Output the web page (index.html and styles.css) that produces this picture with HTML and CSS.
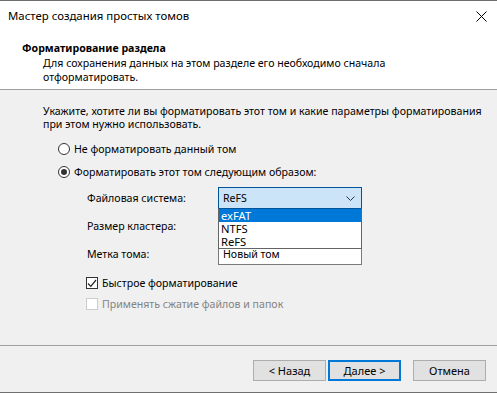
FILE: index.html
```html
<!DOCTYPE html>
<html lang="ru">
<head>
<meta charset="utf-8">
<title>Мастер создания простых томов</title>
<link rel="stylesheet" href="styles.css">
</head>
<body>
<div class="window">
  <div class="titlebar">
    <span class="title">Мастер создания простых томов</span>
    <svg class="close" width="11" height="11" viewBox="0 0 11 11"><path d="M0.5 0.5 L10.5 10.5 M10.5 0.5 L0.5 10.5" stroke="#000" stroke-width="1" fill="none"/></svg>
  </div>
  <div class="header">
    <div class="h-title">Форматирование раздела</div>
    <div class="h-sub">Для сохранения данных на этом разделе его необходимо сначала<br>отформатировать.</div>
  </div>
  <div class="content">
    <p class="intro">Укажите, хотите ли вы форматировать этот том и какие параметры форматирования<br>при этом нужно использовать.</p>
    <div class="radio-row first"><span class="radio"></span><span>Не форматировать данный том</span></div>
    <div class="radio-row"><span class="radio checked"></span><span>Форматировать этот том следующим образом:</span></div>
    <div class="form">
      <span class="label">Файловая система:</span>
      <div class="combo focused"><span>ReFS</span>
        <svg class="chev" width="9" height="5" viewBox="0 0 9 5"><path d="M0.5 0.5 L4.5 4.5 L8.5 0.5" stroke="#333" fill="none"/></svg>
      </div>
      <span class="label">Размер кластера:</span>
      <div class="combo"></div>
      <span class="label">Метка тома:</span>
      <div class="textbox"><span class="tb-text">Новый том</span></div>
      <ul class="droplist">
        <li class="sel">exFAT</li>
        <li>NTFS</li>
        <li>ReFS</li>
      </ul>
    </div>
    <div class="check-row first"><span class="check on"><svg width="10" height="9" viewBox="0 0 10 9"><path d="M1 4.5 L3.8 7.3 L9 1" stroke="#222" stroke-width="1.2" fill="none"/></svg></span><span>Быстрое форматирование</span></div>
    <div class="check-row disabled"><span class="check"></span><span>Применять сжатие файлов и папок</span></div>
  </div>
  <div class="footer">
    <button class="btn">&lt; Назад</button>
    <button class="btn default">Далее &gt;</button>
    <button class="btn cancel">Отмена</button>
  </div>
</div>
</body>
</html>
```
FILE: styles.css
```css
* { box-sizing: border-box; }
html, body { margin: 0; padding: 0; }
body {
  width: 497px;
  height: 393px;
  font-family: "Noto Sans", "Open Sans", sans-serif;
  font-size: 10.6px;
  color: #000;
  background: #f0f0f0;
  overflow: hidden;
}
.window {
  height: 393px;
  display: flex;
  flex-direction: column;
  border-top: 1px solid #6f6f6f;
  border-bottom: 1px solid #6f6f6f;
}
.titlebar {
  height: 30px;
  background: #fff;
  display: flex;
  align-items: center;
  justify-content: space-between;
  padding: 0 10px 0 8px;
}
.title { line-height: 14px; font-size: 11.4px; }
.close { display: block; }
.header {
  background: #fff;
  height: 59px;
  border-bottom: 1px solid #a0a0a0;
  padding: 10px 0 0 22px;
}
.h-title { font-weight: bold; line-height: 14px; }
.h-sub { line-height: 14px; padding-left: 21px; margin-top: 1px; white-space: nowrap; }
.content {
  height: 256px;
  border-bottom: 1px solid #a0a0a0;
  padding: 15px 0 0 43px;
}
.intro { margin: 0; line-height: 13px; white-space: nowrap; }
.radio-row {
  display: flex;
  align-items: center;
  gap: 4px;
  height: 16px;
  margin: 7px 0 0 15px;
}
.radio-row.first { margin-top: 10px; }
.radio {
  width: 12px;
  height: 12px;
  border: 1px solid #333;
  border-radius: 50%;
  background: #fff;
  display: flex;
  align-items: center;
  justify-content: center;
}
.radio.checked::after {
  content: "";
  width: 6px;
  height: 6px;
  border-radius: 50%;
  background: #333;
}
.form {
  position: relative;
  margin: 7px 0 0 44px;
  display: grid;
  grid-template-columns: 131px 144px;
  grid-auto-rows: 22px;
  row-gap: 6px;
  align-items: center;
}
.label { line-height: 14px; }
.combo, .textbox {
  height: 22px;
  border: 1px solid #7a7a7a;
  background: #fff;
  display: flex;
  align-items: center;
  justify-content: space-between;
  padding: 0 4px 0 4px;
  line-height: 14px;
}
.combo { background: #e5e5e5; border-color: #adadad; }
.combo.focused { background: #cce4f7; border-color: #005499; }
.chev { margin-right: 2px; }
.textbox { align-items: flex-start; padding-top: 3px; overflow: hidden; }
.droplist {
  position: absolute;
  left: 131px;
  top: 21px;
  width: 144px;
  margin: 0;
  padding: 0;
  list-style: none;
  background: #fff;
  border: 1px solid #646464;
  border-top-color: #005499;
}
.droplist li {
  height: 13px;
  line-height: 13px;
  padding-left: 2px;
  font-size: 11.2px;
}
.droplist li.sel { background: #0078d7; color: #fff; }
.check-row {
  display: flex;
  align-items: center;
  gap: 4px;
  height: 16px;
  margin: 5px 0 0 43px;
}
.check-row.first { margin-top: 10px; }
.check {
  width: 12px;
  height: 12px;
  border: 1px solid #333;
  background: #fff;
  display: flex;
  align-items: center;
  justify-content: center;
}
.check svg { display: block; }
.check-row.disabled { color: #838383; }
.check-row.disabled .check { border-color: #cccccc; }
.footer {
  flex: 1;
  display: flex;
  align-items: flex-start;
  justify-content: flex-end;
  padding: 14px 11px 0 0;
}
.btn {
  width: 73px;
  height: 21px;
  font: inherit;
  font-size: 11px;
  background: #e1e1e1;
  border: 1px solid #adadad;
  padding: 0;
  margin-left: 2px;
  color: #000;
}
.btn.default { border: 2px solid #0078d7; }
.btn.cancel { margin-left: 12px; }
```
